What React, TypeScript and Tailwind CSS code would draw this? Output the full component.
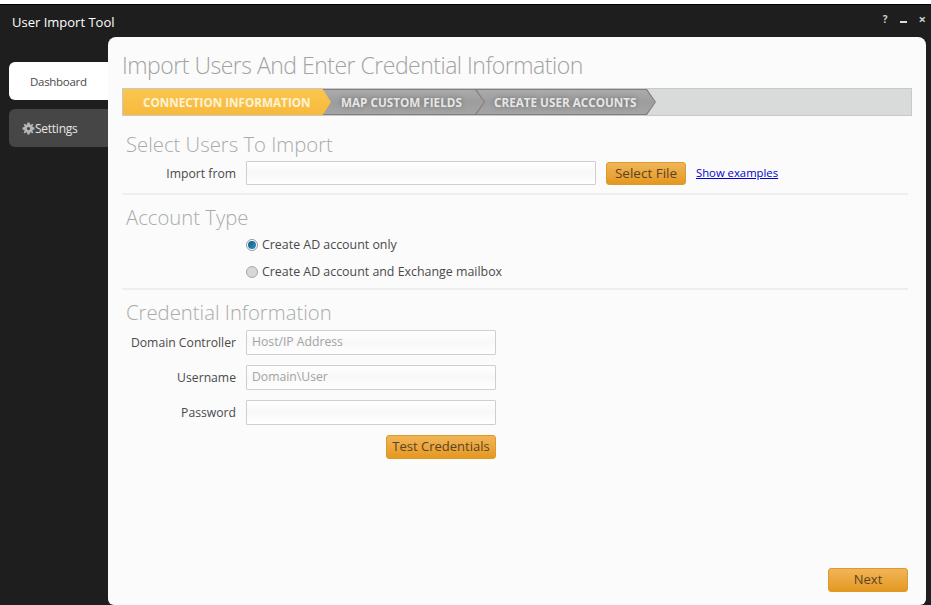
import React from "react";

const F = "font-['Open_Sans','Noto_Sans',sans-serif]";

function Gear() {
  return (
    <svg width="13" height="13" viewBox="0 0 24 24" className="shrink-0">
      <path
        fill="#b5b5b5"
        fillRule="evenodd"
        d="M10 1h4l.6 3.1 1.9.8L19.1 3 21 4.9l-1.900 2.600.8 1.900L23 10v4l-3.100.6-.8 1.900 1.900 2.600-1.900 1.900-2.600-1.900-1.900.8L14 23h-4l-.6-3.100-1.900-.8L4.900 21 3 19.100l1.900-2.600-.8-1.900L1 14v-4l3.100-.6.8-1.900L3 4.900 4.900 3l2.600 1.900 1.900-.8L10 1zm2 8a3 3 0 1 0 0 6 3 3 0 0 0 0-6z"
      />
    </svg>
  );
}

function Section({ children, className = "" }: { children: React.ReactNode; className?: string }) {
  return (
    <h2 className={`pl-[4px] text-[20.3px] font-light leading-[28px] text-[#a9abab] ${className}`}>{children}</h2>
  );
}

function Label({ children }: { children: React.ReactNode }) {
  return <span className="w-[114px] shrink-0 pt-[2px] text-right text-[12.2px] text-[#4a4a4a]">{children}</span>;
}

function Field({ value, w = "w-[250px]", h = "h-[25px]" }: { value?: string; w?: string; h?: string }) {
  return (
    <div
      className={`${w} ${h} flex items-center rounded-[1px] border border-[#cfcfcf] bg-gradient-to-b from-white via-[#f8f8f8] to-white pl-[5px] text-[12.2px] text-[#a3a3a3]`}
    >
      {value}
    </div>
  );
}

function OrangeButton({ children, className = "" }: { children: React.ReactNode; className?: string }) {
  return (
    <button
      className={`flex items-center justify-center rounded-[3px] border border-[#d99a2e] bg-gradient-to-b from-[#f1b556] to-[#e5981d] text-[#5a4422] ${className}`}
    >
      {children}
    </button>
  );
}

function Radio({ checked, label }: { checked?: boolean; label: string }) {
  return (
    <div className="ml-[124px] flex items-center gap-[4px] text-[12.4px] text-[#4a4a4a]">
      <span
        className={`flex h-[12px] w-[12px] items-center justify-center rounded-full border ${
          checked ? "border-[#a58bb0] bg-white" : "border-[#a8a8a8] bg-[#d8d8d8]"
        }`}
      >
        {checked && <span className="h-[8px] w-[8px] rounded-full bg-gradient-to-br from-[#0b5d86] to-[#2a9ab5]" />}
      </span>
      {label}
    </div>
  );
}

export default function App() {
  return (
    <div className={`${F} flex h-[605px] w-[931px] flex-col overflow-hidden bg-white pt-[4px]`}>
      <div className="flex min-h-0 flex-1 flex-col border-t border-black bg-[#1e1e1e] pr-[5px]">
        <header className="flex h-[32px] shrink-0 items-center justify-between pl-[12px] pt-[4px] text-[13px] text-white">
          <span>User Import Tool</span>
          <div className="-mr-[5px] flex items-center gap-[12px] pb-[8px] pr-[5px] text-[10px] font-bold leading-none text-[#cfcfcf]">
            <span>?</span>
            <span className="mt-[6px] h-[2px] w-[7px] bg-[#dcdcdc]" />
            <span className="text-[13px]">×</span>
          </div>
        </header>
        <div className="flex min-h-0 flex-1">
          <nav className="flex w-[108px] shrink-0 flex-col gap-[9px] pl-[9px] pt-[25px]">
            <div className="flex h-[38px] items-center rounded-l-[6px] bg-white pl-[21px] pt-[2px] text-[11.5px] tracking-[-0.3px] text-[#4a4a4a]">
              Dashboard
            </div>
            <div className="flex h-[38px] items-center rounded-l-[6px] bg-[#464646] pl-[13px] text-[12px] tracking-[-0.25px] text-[#e6e6e6]">
              <Gear />
              <span className="pt-[2px]">Settings</span>
            </div>
          </nav>
          <main className="relative flex min-w-0 flex-1 flex-col rounded-t-[8px] rounded-b-[6px] bg-[#fbfbfb] pl-[14px] pr-[14px]">
            <h1 className="mt-[13px] h-[30px] text-[23px] font-light leading-[30px] tracking-[-0.5px] text-[#a1a3a3]">
              Import Users And Enter Credential Information
            </h1>
            <div className="mt-[8px] flex h-[28px] shrink-0 border border-[#c8caca] bg-[#d9dbdb] text-[11.7px] font-bold">
              <div className="z-30 flex h-full w-[208px] items-center bg-gradient-to-b from-[#fbc64f] to-[#f7b93c] pl-[20px] pt-[2px] text-[#fdf3d8] [clip-path:polygon(0_0,96%_0,100%_50%,96%_100%,0_100%)]">
                CONNECTION INFORMATION
              </div>
              <div className="z-20 -ml-[9px] flex h-full w-[163px] items-center bg-[#7f7f7f] py-px [clip-path:polygon(0_0,94.500%_0,100%_50%,94.500%_100%,0_100%)]">
                <div className="flex h-full w-[162px] items-center bg-gradient-to-b from-[#ababab] via-[#9d9d9d] to-[#a5a5a5] pl-[19px] pt-[2px] text-[#e6e6e6] [text-shadow:0_0_5px_#6a6a6a] [clip-path:polygon(0_0,94.500%_0,100%_50%,94.500%_100%,0_100%)]">
                  MAP CUSTOM FIELDS
                </div>
              </div>
              <div className="z-10 -ml-[9px] flex h-full w-[180px] items-center bg-[#7f7f7f] py-px [clip-path:polygon(0_0,95%_0,100%_50%,95%_100%,0_100%)]">
                <div className="flex h-full w-[179px] items-center bg-gradient-to-b from-[#ababab] via-[#9d9d9d] to-[#a5a5a5] pl-[18px] pt-[2px] text-[#e6e6e6] [text-shadow:0_0_5px_#6a6a6a] [clip-path:polygon(0_0,95%_0,100%_50%,95%_100%,0_100%)]">
                  CREATE USER ACCOUNTS
                </div>
              </div>
            </div>

            <Section className="mt-[14px]">Select Users To Import</Section>
            <div className="mt-[3px] flex items-center gap-[10px]">
              <Label>Import from</Label>
              <Field w="w-[350px]" h="h-[24px]" />
              <OrangeButton className="h-[23px] w-[80px] text-[13.5px]">Select File</OrangeButton>
              <a href="#" className="text-[11.3px] text-[#0000d0] underline">
                Show examples
              </a>
            </div>
            <div className="mr-[4px] mt-[8px] h-[2px] shrink-0 bg-[#eeeeee]" />

            <Section className="mt-[8px]">Account Type</Section>
            <div className="mt-[5px] flex flex-col gap-[10px] leading-[17px]">
              <Radio checked label="Create AD account only" />
              <Radio label="Create AD account and Exchange mailbox" />
            </div>
            <div className="mr-[4px] mt-[8px] h-[2px] shrink-0 bg-[#eeeeee]" />

            <Section className="mt-[8px]">Credential Information</Section>
            <div className="mt-[4px] flex flex-col gap-[10px]">
              <div className="flex items-center gap-[10px]">
                <Label>Domain Controller</Label>
                <Field value="Host/IP Address" />
              </div>
              <div className="flex items-center gap-[10px]">
                <Label>Username</Label>
                <Field value="Domain\User" />
              </div>
              <div className="flex items-center gap-[10px]">
                <Label>Password</Label>
                <Field />
              </div>
            </div>
            <OrangeButton className="ml-[264px] mt-[10px] h-[24px] w-[110px] text-[13px]">Test Credentials</OrangeButton>

            <div className="mt-auto mb-[13px] flex justify-end pr-[4px]">
              <OrangeButton className="h-[24px] w-[80px] text-[13px]">Next</OrangeButton>
            </div>
          </main>
        </div>
      </div>
    </div>
  );
}
